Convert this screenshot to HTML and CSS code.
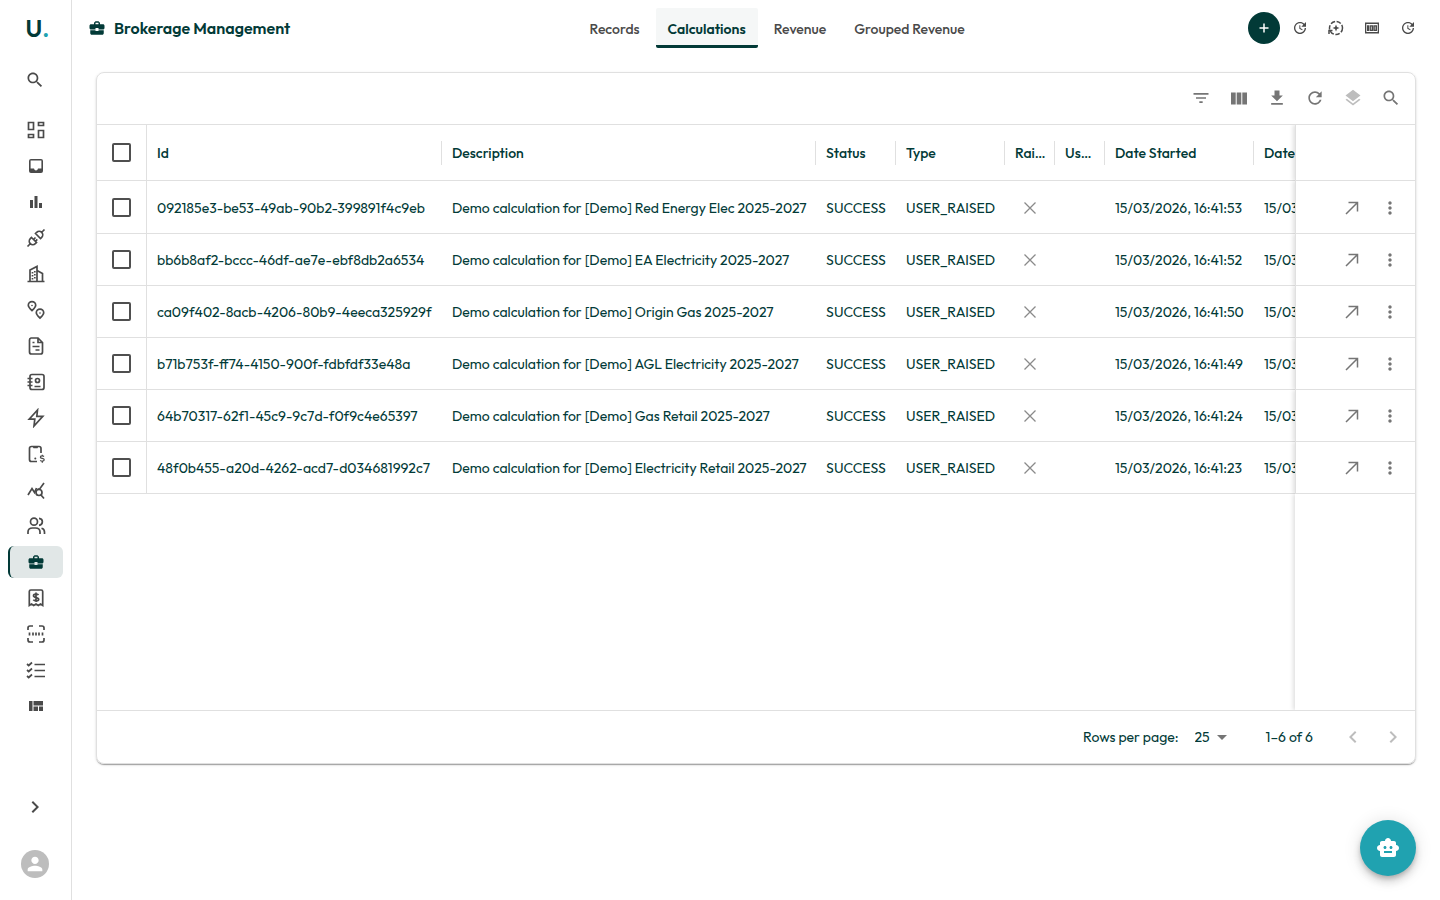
FILE: index.html
```html
<!DOCTYPE html>
<html lang="en">
<head>
<meta charset="utf-8">
<meta name="viewport" content="width=device-width, initial-scale=1">
<title>Brokerage Management</title>
<link rel="stylesheet" href="styles.css">
</head>
<body>
<svg class="sprite" aria-hidden="true">
  <symbol id="i-search" viewBox="0 0 24 24"><path d="M15.5 14h-.79l-.28-.27C15.41 12.59 16 11.11 16 9.5 16 5.91 13.09 3 9.5 3S3 5.91 3 9.5 5.91 16 9.5 16c1.61 0 3.09-.59 4.23-1.57l.27.28v.79l5 4.99L20.49 19l-4.99-5zm-6 0C7.01 14 5 11.99 5 9.5S7.01 5 9.5 5 14 7.01 14 9.5 11.99 14 9.5 14z"/></symbol>
  <symbol id="i-case" viewBox="0 0 24 24"><path d="M10 16v-1H3.01L3 19c0 1.11.89 2 2 2h14c1.11 0 2-.89 2-2v-4h-7v1h-4zm10-9h-4.01V5l-2-2h-4l-2 2v2H4c-1.1 0-2 .9-2 2v3c0 1.11.89 2 2 2h6v-2h4v2h6c1.1 0 2-.9 2-2V9c0-1.1-.9-2-2-2zm-6 0h-4V5h4v2z"/></symbol>
  <symbol id="i-update" viewBox="0 0 24 24"><path d="M11 8v5l4.25 2.52.77-1.28-3.52-2.09V8H11zm10 2V3l-2.64 2.64C16.74 4.01 14.49 3 12 3c-4.97 0-9 4.03-9 9s4.03 9 9 9 9-4.03 9-9h-2c0 3.86-3.14 7-7 7s-7-3.14-7-7 3.14-7 7-7c1.93 0 3.68.79 4.95 2.05L14 10h7z"/></symbol>
  <symbol id="i-cross" viewBox="0 0 20 20"><path d="M4.500 4.500l11 11M15.500 4.500l-11 11" class="line thin"/></symbol>
  <symbol id="i-open" viewBox="0 0 20 20"><path d="M4 16L15.500 4.500M6.500 4.500h9v9" class="line"/></symbol>
  <symbol id="i-more" viewBox="0 0 24 24"><path d="M12 8c1.100 0 2-.9 2-2s-.9-2-2-2-2 .9-2 2 .9 2 2 2zm0 2c-1.100 0-2 .9-2 2s.9 2 2 2 2-.9 2-2-.9-2-2-2zm0 6c-1.100 0-2 .9-2 2s.9 2 2 2 2-.9 2-2-.9-2-2-2z"/></symbol>
  <symbol id="i-left" viewBox="0 0 24 24"><path d="M15.410 7.410L14 6l-6 6 6 6 1.410-1.410L10.830 12z"/></symbol>
  <symbol id="i-right" viewBox="0 0 24 24"><path d="M10 6L8.590 7.410 13.170 12l-4.580 4.590L10 18l6-6z"/></symbol>
</svg>
<div class="app">
  <aside class="sidebar">
    <a class="logo" href="#" aria-label="Home">U<span class="logo-dot">.</span></a>
    <button class="side-button" aria-label="Search"><svg class="icon-20"><use href="#i-search"/></svg></button>
    <nav class="side-nav" aria-label="Main">
      <a href="#" aria-label="Dashboard"><svg viewBox="0 0 20 20"><g class="line"><path d="M2.500 2.500h5v7h-5zM12.500 2.500h5v3h-5zM2.500 14.500h5v3h-5zM12.500 10.500h5v7h-5z"/></g></svg></a>
      <a href="#" aria-label="Inbox"><svg viewBox="0 0 20 20"><path fill-rule="evenodd" d="M5 3h10a2 2 0 0 1 2 2v10a2 2 0 0 1-2 2H5a2 2 0 0 1-2-2V5a2 2 0 0 1 2-2zm-.400 1.600v8H8c.3 1.300 1 2 2 2s1.700-.7 2-2h3.400v-8z"/></svg></a>
      <a href="#" aria-label="Charts"><svg viewBox="0 0 20 20"><path d="M4 8h3v8H4zM8.500 4h3v12h-3zM13 11h3v5h-3z"/></svg></a>
      <a href="#" aria-label="Connections"><svg viewBox="0 0 20 20"><g class="line"><path d="M1.500 18.500l3-3M18.500 1.500l-3 3M5.500 9.500l5 5-1.200 1.200a3.300 3.300 0 0 1-5-5zM9.500 5.500l5 5 1.200-1.200a3.300 3.300 0 0 0-5-5zM7.500 11.500l2-2M9.300 13.300l2-2"/></g></svg></a>
      <a href="#" aria-label="Buildings"><svg viewBox="0 0 20 20"><g class="line"><path d="M1.500 17.500h17M4 17V6l7-3.500V17M11 6.500l5.500 3V17"/><path d="M6.500 8v8M8.800 7v9" stroke-dasharray="1.500 1.500"/></g></svg></a>
      <a href="#" aria-label="Locations"><svg viewBox="0 0 20 20"><g class="line"><path d="M6 10.500C3.500 8.300 2.300 6.900 2.300 5.300a3.700 3.700 0 0 1 7.400 0c0 1.600-1.200 3-3.700 5.200zM14 18c-2.500-2.200-3.700-3.600-3.700-5.200a3.700 3.700 0 0 1 7.400 0c0 1.600-1.200 3-3.700 5.200z"/></g><circle cx="6" cy="5.500" r=".8"/><circle cx="14" cy="13" r=".8"/></svg></a>
      <a href="#" aria-label="Documents"><svg viewBox="0 0 20 20"><g class="line"><path d="M5 2h7l4.500 4.500V16a2 2 0 0 1-2 2H5.500a2 2 0 0 1-2-2V4A2 2 0 0 1 5 2zM12 2v4.500h4.500M6.500 6.500h2M6.500 10.500h7M9.500 14h4"/></g></svg></a>
      <a href="#" aria-label="Contacts"><svg viewBox="0 0 20 20"><g class="line"><rect x="4" y="2.500" width="14" height="15" rx="2"/><path d="M1.500 6.500h5M1.500 10h5M1.500 13.500h5M8.500 14.500h6"/><circle cx="11.500" cy="8.500" r="2"/></g></svg></a>
      <a href="#" aria-label="Energy"><svg viewBox="0 0 20 20"><g class="line"><path d="M11.500 2L3.200 11.200h5.600L8 18l8.800-9.700h-6z"/></g></svg></a>
      <a href="#" aria-label="Billing"><svg viewBox="0 0 20 20"><g class="line"><path d="M11 17.500H5.500a2 2 0 0 1-2-2v-11a2 2 0 0 1 2-2H13a2 2 0 0 1 2 2V9M7.500 2.500l.5 1h3l.5-1"/><path class="thin" d="M18 12.500c-1-.9-3.600-.8-3.600.7 0 1.700 3.800.8 3.800 2.600 0 1.600-2.800 1.700-4 .6M16.300 10.800v1.500M16.300 17v1.700"/></g><circle cx="9.300" cy="14.500" r="1"/></svg></a>
      <a href="#" aria-label="Analysis"><svg viewBox="0 0 20 20"><g class="line"><path d="M2 15l4-6.500 2.500 4 2-4.500M11.500 9l2 .2L18 3"/><circle cx="13" cy="12.500" r="3"/><path d="M15 15l3 3.500"/></g></svg></a>
      <a href="#" aria-label="People"><svg viewBox="0 0 20 20"><g class="line"><circle cx="8" cy="5.700" r="3.500"/><path d="M2 18v-2c0-2.500 2-4 4.500-4h3c2.500 0 4.500 1.500 4.500 4v2M13 2.300c4.500.4 4.500 6.500 0 7M15.500 12.300c2 .5 3 1.900 3 3.700v2"/></g></svg></a>
      <a class="active" href="#" aria-label="Brokerage" aria-current="page"><svg class="icon-18"><use href="#i-case"/></svg></a>
      <a href="#" aria-label="Invoices"><svg viewBox="0 0 20 20"><g class="line"><path d="M3.300 17.500V3.500a1.500 1.500 0 0 1 1.500-1.500h10.400a1.500 1.500 0 0 1 1.500 1.500v14l-2.200-1.500-2.200 1.500-2.300-1.500-2.300 1.500L5.500 16zM12.500 7c-1.200-1.400-5-1.200-5 .8 0 2.500 5.200 1 5.200 3.500 0 2-4 2.100-5.400.5M10 4.500v9.500"/></g></svg></a>
      <a href="#" aria-label="Scan"><svg viewBox="0 0 20 20"><g class="line"><path d="M2 6V4a2 2 0 0 1 2-2h3M13 2h3a2 2 0 0 1 2 2v2M18 14v2a2 2 0 0 1-2 2h-3M7 18H4a2 2 0 0 1-2-2v-2M3.500 8.500v3M7 8.500v3M10 8.500v3M13 8.500v3M16.500 8.500v3"/></g></svg></a>
      <a href="#" aria-label="Tasks"><svg viewBox="0 0 20 20"><g class="line"><path d="M8.500 4.500H19M8.500 10.500H19M8.500 16.500H19M1 4l1.700 1.500L6 2.500M1 10l1.700 1.500L6 8.500M1 16l1.700 1.500L6 14.500"/></g></svg></a>
      <a href="#" aria-label="Layout"><svg viewBox="0 0 20 20"><path d="M3 5h3.500v10H3zM7.500 5H17v4.500H7.500zM7.500 10.500h4.500V15H7.500zM13 10.500h4V15h-4z"/></svg></a>
    </nav>
    <button class="side-button expand" aria-label="Expand menu"><svg class="icon-24"><use href="#i-right"/></svg></button>
    <button class="avatar" aria-label="Account"><svg class="icon-22" viewBox="0 0 24 24"><path d="M12 12c2.210 0 4-1.790 4-4s-1.790-4-4-4-4 1.790-4 4 1.790 4 4 4zm0 2c-2.670 0-8 1.340-8 4v2h16v-2c0-2.660-5.330-4-8-4z"/></svg></button>
  </aside>
  <div class="page">
    <header class="topbar">
      <h1 class="title"><svg class="icon-18"><use href="#i-case"/></svg>Brokerage Management</h1>
      <nav class="tabs" aria-label="Sections">
        <a href="#">Records</a>
        <a class="active" href="#" aria-current="page">Calculations</a>
        <a href="#">Revenue</a>
        <a href="#">Grouped Revenue</a>
      </nav>
      <div class="actions">
        <button class="add" aria-label="Add"><svg class="icon-16" viewBox="0 0 16 16"><path d="M8 3.500v9M3.500 8h9" class="line"/></svg></button>
        <button aria-label="Update"><svg class="icon-16"><use href="#i-update"/></svg></button>
        <button aria-label="Recalculate"><svg class="icon-16" viewBox="0 0 16 16"><g class="line"><circle cx="8" cy="8" r="6.500" stroke-dasharray="4.500 1.600"/><path d="M1 14v-3.500h3.500"/></g><path d="M8 4.500l1 2.500 2.500 1L9 9l-1 2.500L7 9 4.500 8 7 7z"/></svg></button>
        <button aria-label="Payments"><svg class="icon-16" viewBox="0 0 16 16"><path fill-rule="evenodd" d="M1 2.500h14v11H1zM2.300 4v8h11.400V4z"/><path fill-rule="evenodd" d="M3 5.200h2V11H3zM5.500 5.200H9V11H5.500zM6.900 6.500v3.200h.7V6.500zM9.300 5.200H13V11H9.300zM10.800 6.500v3.200h.7V6.500z"/></svg></button>
        <button aria-label="History"><svg class="icon-16"><use href="#i-update"/></svg></button>
      </div>
    </header>
    <main class="content">
      <section class="card" aria-label="Calculations">
        <div class="toolbar">
          <button aria-label="Filter"><svg class="icon-20" viewBox="0 0 24 24"><path d="M10 18h4v-2h-4v2zM3 6v2h18V6H3zm3 7h12v-2H6v2z"/></svg></button>
          <button aria-label="Columns"><svg class="icon-20" viewBox="0 0 20 20"><path d="M2 4.500h4.700v12H2zM7.700 4.500h4.600v12H7.700zM13.300 4.500H18v12h-4.700z"/></svg></button>
          <button aria-label="Download"><svg class="icon-20" viewBox="0 0 24 24"><path d="M19 9h-4V3H9v6H5l7 7 7-7zM5 18v2h14v-2H5z"/></svg></button>
          <button aria-label="Refresh"><svg class="icon-20" viewBox="0 0 24 24"><path d="M17.650 6.350C16.200 4.900 14.210 4 12 4c-4.420 0-7.990 3.580-7.990 8s3.570 8 7.990 8c3.730 0 6.840-2.550 7.730-6h-2.080c-.82 2.330-3.040 4-5.650 4-3.310 0-6-2.690-6-6s2.690-6 6-6c1.660 0 3.140.69 4.220 1.780L13 11h7V4l-2.350 2.350z"/></svg></button>
          <button aria-label="Layers" disabled><svg class="icon-20" viewBox="0 0 24 24"><path d="M11.990 18.540l-7.370-5.730L3 14.070l9 7 9-7-1.630-1.270-7.380 5.740zM12 16l7.360-5.730L21 9l-9-7-9 7 1.630 1.270L12 16z"/></svg></button>
          <button aria-label="Search table"><svg class="icon-20"><use href="#i-search"/></svg></button>
        </div>
        <div class="grid">
          <table>
            <colgroup><col class="c-check"><col class="c-id"><col class="c-desc"><col class="c-status"><col class="c-type"><col class="c-flag"><col class="c-flag"><col class="c-date"><col class="c-date"><col class="c-actions"></colgroup>
            <thead>
              <tr><th class="check"><input type="checkbox" aria-label="Select all rows"></th><th>Id</th><th>Description</th><th>Status</th><th>Type</th><th>Raised</th><th>User Raised</th><th>Date Started</th><th>Date Finished</th><th class="pinned"></th></tr>
            </thead>
            <tbody>
              <tr><td class="check"><input type="checkbox" aria-label="Select row 1"></td><td>092185e3-be53-49ab-90b2-399891f4c9eb</td><td>Demo calculation for [Demo] Red Energy Elec 2025-2027</td><td>SUCCESS</td><td>USER_RAISED</td><td class="flag"><svg class="icon-20"><use href="#i-cross"/></svg></td><td></td><td>15/03/2026, 16:41:53</td><td>15/03/2026, 16:41:54</td><td class="pinned"><div class="row-actions"><button aria-label="Open"><svg class="icon-20"><use href="#i-open"/></svg></button><button aria-label="More"><svg class="icon-20"><use href="#i-more"/></svg></button></div></td></tr>
              <tr><td class="check"><input type="checkbox" aria-label="Select row 2"></td><td>bb6b8af2-bccc-46df-ae7e-ebf8db2a6534</td><td>Demo calculation for [Demo] EA Electricity 2025-2027</td><td>SUCCESS</td><td>USER_RAISED</td><td class="flag"><svg class="icon-20"><use href="#i-cross"/></svg></td><td></td><td>15/03/2026, 16:41:52</td><td>15/03/2026, 16:41:53</td><td class="pinned"><div class="row-actions"><button aria-label="Open"><svg class="icon-20"><use href="#i-open"/></svg></button><button aria-label="More"><svg class="icon-20"><use href="#i-more"/></svg></button></div></td></tr>
              <tr><td class="check"><input type="checkbox" aria-label="Select row 3"></td><td>ca09f402-8acb-4206-80b9-4eeca325929f</td><td>Demo calculation for [Demo] Origin Gas 2025-2027</td><td>SUCCESS</td><td>USER_RAISED</td><td class="flag"><svg class="icon-20"><use href="#i-cross"/></svg></td><td></td><td>15/03/2026, 16:41:50</td><td>15/03/2026, 16:41:51</td><td class="pinned"><div class="row-actions"><button aria-label="Open"><svg class="icon-20"><use href="#i-open"/></svg></button><button aria-label="More"><svg class="icon-20"><use href="#i-more"/></svg></button></div></td></tr>
              <tr><td class="check"><input type="checkbox" aria-label="Select row 4"></td><td>b71b753f-ff74-4150-900f-fdbfdf33e48a</td><td>Demo calculation for [Demo] AGL Electricity 2025-2027</td><td>SUCCESS</td><td>USER_RAISED</td><td class="flag"><svg class="icon-20"><use href="#i-cross"/></svg></td><td></td><td>15/03/2026, 16:41:49</td><td>15/03/2026, 16:41:50</td><td class="pinned"><div class="row-actions"><button aria-label="Open"><svg class="icon-20"><use href="#i-open"/></svg></button><button aria-label="More"><svg class="icon-20"><use href="#i-more"/></svg></button></div></td></tr>
              <tr><td class="check"><input type="checkbox" aria-label="Select row 5"></td><td>64b70317-62f1-45c9-9c7d-f0f9c4e65397</td><td>Demo calculation for [Demo] Gas Retail 2025-2027</td><td>SUCCESS</td><td>USER_RAISED</td><td class="flag"><svg class="icon-20"><use href="#i-cross"/></svg></td><td></td><td>15/03/2026, 16:41:24</td><td>15/03/2026, 16:41:25</td><td class="pinned"><div class="row-actions"><button aria-label="Open"><svg class="icon-20"><use href="#i-open"/></svg></button><button aria-label="More"><svg class="icon-20"><use href="#i-more"/></svg></button></div></td></tr>
              <tr><td class="check"><input type="checkbox" aria-label="Select row 6"></td><td>48f0b455-a20d-4262-acd7-d034681992c7</td><td>Demo calculation for [Demo] Electricity Retail 2025-2027</td><td>SUCCESS</td><td>USER_RAISED</td><td class="flag"><svg class="icon-20"><use href="#i-cross"/></svg></td><td></td><td>15/03/2026, 16:41:23</td><td>15/03/2026, 16:41:24</td><td class="pinned"><div class="row-actions"><button aria-label="Open"><svg class="icon-20"><use href="#i-open"/></svg></button><button aria-label="More"><svg class="icon-20"><use href="#i-more"/></svg></button></div></td></tr>
            </tbody>
          </table>
        </div>
        <div class="filler"><div class="filler-pin"></div></div>
        <footer class="pager">
          <label for="page-size">Rows per page:</label>
          <div class="select">
            <select id="page-size"><option>25</option><option>50</option><option>100</option></select>
            <svg class="icon-24" viewBox="0 0 24 24"><path d="M7 10l5 5 5-5z"/></svg>
          </div>
          <span class="range">1–6 of 6</span>
          <div class="pages">
            <button aria-label="Previous page" disabled><svg class="icon-24"><use href="#i-left"/></svg></button>
            <button aria-label="Next page" disabled><svg class="icon-24"><use href="#i-right"/></svg></button>
          </div>
        </footer>
      </section>
    </main>
  </div>
  <button class="chat" aria-label="Assistant"><svg class="icon-24" viewBox="0 0 24 24"><path d="M20 9V7c0-1.100-.9-2-2-2h-3c0-1.660-1.340-3-3-3S9 3.340 9 5H6c-1.100 0-2 .9-2 2v2c-1.660 0-3 1.340-3 3s1.340 3 3 3v4c0 1.100.9 2 2 2h12c1.100 0 2-.9 2-2v-4c1.660 0 3-1.340 3-3s-1.340-3-3-3zM7.500 11.500c0-.83.67-1.500 1.500-1.500s1.500.67 1.500 1.500S9.830 13 9 13s-1.500-.67-1.500-1.500zM16 17H8v-2h8v2zm-1-4c-.83 0-1.500-.67-1.500-1.500S14.170 10 15 10s1.500.67 1.500 1.500S15.830 13 15 13z"/></svg></button>
</div>
</body>
</html>
```

FILE: styles.css
```css
:root {
  --ink: #023a37;
  --grey: #4a4a4a;
  --muted: #757575;
  --line: #e0e0e0;
  --teal: #20a2b0;
}
* { box-sizing: border-box; }
body {
  margin: 0;
  background: #fff;
  color: var(--ink);
  font-family: Outfit, Lato, sans-serif;
  font-size: 14px;
  line-height: 20px;
}
a { color: inherit; text-decoration: none; }
button {
  display: flex;
  align-items: center;
  justify-content: center;
  padding: 0;
  border: 0;
  background: none;
  color: inherit;
  font: inherit;
  cursor: pointer;
}
svg { display: block; fill: currentColor; }
.sprite { display: none; }
.line { fill: none; stroke: currentColor; stroke-width: 1.5; }
.thin { stroke-width: 1.25; }
.icon-16 { width: 16px; height: 16px; }
.icon-18 { width: 18px; height: 18px; }
.icon-20 { width: 20px; height: 20px; }
.icon-22 { width: 22px; height: 22px; }
.icon-24 { width: 24px; height: 24px; }

.app { display: flex; min-height: 100vh; }

.sidebar {
  display: flex;
  flex-direction: column;
  flex: none;
  width: 72px;
  padding: 12px 8px 22px;
  border-right: 1px solid var(--line);
  color: var(--grey);
}
.logo {
  display: flex;
  justify-content: center;
  height: 32px;
  padding-left: 4px;
  color: var(--ink);
  font-size: 24px;
  font-weight: 600;
  line-height: 32px;
}
.logo-dot { color: var(--teal); }
.side-button { height: 32px; margin-top: 20px; padding-right: 2px; }
.side-nav {
  display: flex;
  flex-direction: column;
  gap: 4px;
  margin-top: 18px;
}
.side-nav a {
  display: flex;
  align-items: center;
  justify-content: center;
  height: 32px;
  padding-left: 1px;
  border-radius: 6px;
}
.side-nav svg { width: 20px; height: 20px; }
.side-nav .line { stroke-width: 1.7; }
.side-nav .icon-18 { width: 18px; height: 18px; }
.side-nav .active {
  padding: 0 1px 0 0;
  border-left: 2px solid var(--ink);
  background: #e1e7e7;
  color: var(--ink);
}
.expand { margin-top: auto; }
.avatar {
  align-self: center;
  width: 28px;
  height: 28px;
  margin: 27px 1px 0 0;
  border-radius: 50%;
  background: #bdbdbd;
  color: #fff;
}

.page { display: flex; flex: 1; flex-direction: column; min-width: 0; }
.topbar {
  display: flex;
  align-items: center;
  justify-content: space-between;
  height: 56px;
  padding: 0 16px;
}
.title {
  display: flex;
  align-items: center;
  gap: 8px;
  margin: 0 16px 0 0;
  font-size: 16px;
  font-weight: 600;
  line-height: 24px;
}
.tabs { display: flex; gap: 4px; }
.tabs a {
  height: 40px;
  padding: 11px 12px 6px;
  border-bottom: 3px solid transparent;
  color: var(--grey);
  font-weight: 500;
}
.tabs .active {
  border-color: var(--ink);
  border-radius: 2px;
  background: #f5f7f7;
  color: var(--ink);
  font-weight: 600;
}
.actions { display: flex; gap: 4px; }
.actions button {
  width: 32px;
  height: 32px;
  border-radius: 50%;
  color: var(--grey);
}
.actions .add { background: var(--ink); color: #fff; }

.content {
  display: flex;
  flex: 1;
  flex-direction: column;
  padding: 16px 24px 136px;
}
.card {
  display: flex;
  flex: 1;
  flex-direction: column;
  overflow: hidden;
  border: 1px solid var(--line);
  border-radius: 8px;
  box-shadow: 0 2px 1px -1px rgba(0, 0, 0, .2), 0 1px 1px rgba(0, 0, 0, .14), 0 1px 3px rgba(0, 0, 0, .12);
}
.toolbar {
  display: flex;
  justify-content: flex-end;
  gap: 8px;
  padding: 10px 9px 11px;
  border-bottom: 1px solid var(--line);
  color: var(--muted);
}
.toolbar button { width: 30px; height: 30px; }
.toolbar button:disabled { color: #bdbdbd; }

.grid { overflow-x: auto; scrollbar-width: none; }
table {
  width: 100%;
  min-width: 1426px;
  border-spacing: 0;
  table-layout: fixed;
}
.c-check { width: 50px; }
.c-id { width: 295px; }
.c-desc { width: 374px; }
.c-status { width: 80px; }
.c-type { width: 109px; }
.c-flag { width: 50px; }
.c-date { width: 149px; }
.c-actions { width: 120px; }
th, td {
  height: 52px;
  padding: 0 8px 0 10px;
  overflow: hidden;
  border-bottom: 1px solid var(--line);
  text-align: left;
  text-overflow: ellipsis;
  white-space: nowrap;
}
th {
  height: 56px;
  background: linear-gradient(var(--line), var(--line)) right center / 1px 24px no-repeat;
  font-weight: 500;
}
tbody tr:first-child td { height: 53px; padding-top: 1px; }
.check {
  padding: 0 15px;
  border-right: 1px solid var(--line);
  background: none;
}
.check input {
  display: block;
  width: 19px;
  height: 19px;
  margin: 0;
  border: 2px solid #4f4f4f;
  border-radius: 2px;
  appearance: none;
}
.check input:checked { background: var(--ink); }
.flag { padding: 0 15px; color: #8a8a8a; }
.pinned {
  position: sticky;
  right: 0;
  padding: 0 10px;
  overflow: visible;
  border-left: 1px solid var(--line);
  background: #fff;
  box-shadow: -2px 0 4px rgba(0, 0, 0, .12);
  clip-path: inset(0 0 0 -8px);
}
.row-actions { display: flex; justify-content: flex-end; gap: 8px; color: var(--muted); }
.row-actions button { width: 30px; height: 30px; }
.filler { display: flex; flex: 1; justify-content: flex-end; overflow: hidden; }
.filler-pin { width: 120px; box-shadow: -2px 0 4px rgba(0, 0, 0, .12); }

.pager {
  display: flex;
  align-items: center;
  justify-content: flex-end;
  height: 53px;
  padding-right: 2px;
  border-top: 1px solid var(--line);
}
.select { display: flex; align-items: center; margin: 0 32px 0 16px; }
.select select {
  width: 39px;
  margin-right: -24px;
  padding: 0 24px 0 0;
  border: 0;
  background: none;
  color: inherit;
  font: inherit;
  appearance: none;
}
.select svg { color: var(--muted); pointer-events: none; }
.pages { display: flex; margin-left: 20px; color: #bdbdbd; }
.pages button { width: 40px; height: 40px; }

.chat {
  position: fixed;
  right: 24px;
  bottom: 24px;
  width: 56px;
  height: 56px;
  border-radius: 50%;
  background: var(--teal);
  color: #fff;
  box-shadow: 0 3px 5px -1px rgba(0, 0, 0, .2), 0 6px 10px rgba(0, 0, 0, .14), 0 1px 18px rgba(0, 0, 0, .12);
}
```
